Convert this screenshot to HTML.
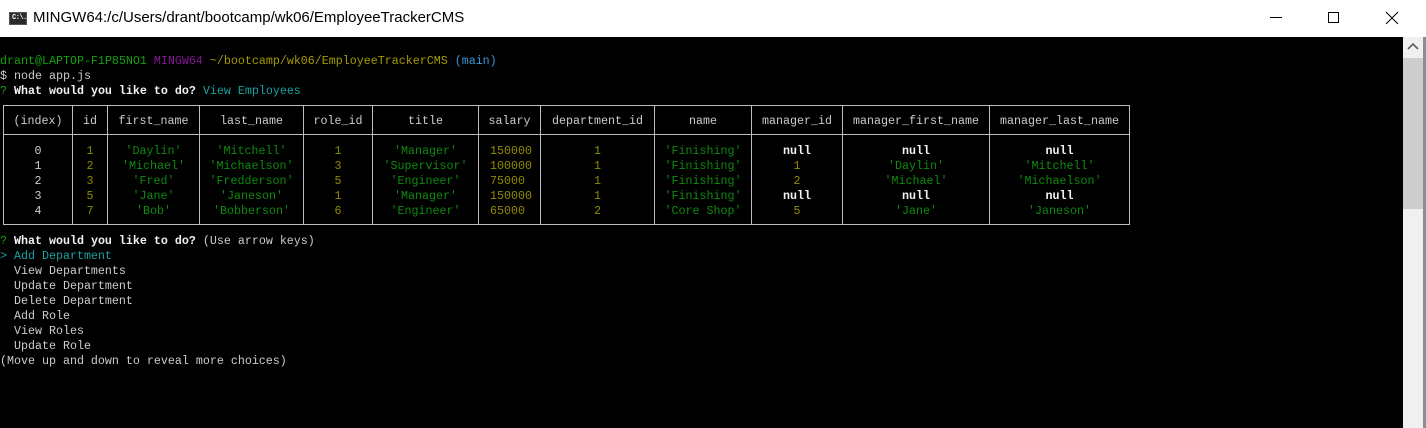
<!DOCTYPE html>
<html><head><meta charset="utf-8">
<style>
*{margin:0;padding:0;box-sizing:border-box}
html,body{width:1426px;height:428px;overflow:hidden;background:#000}
#title{position:absolute;left:0;top:0;width:1426px;height:37px;background:#fff}
#title .t{position:absolute;left:33px;top:9px;font:15px "Liberation Sans",sans-serif;color:#000}
#icon{position:absolute;left:9px;top:12px;width:18px;height:13px;background:#2b2b2b;border:1px solid #555}
#icon span{position:absolute;left:2px;top:1px;font:bold 7px "Liberation Mono",monospace;color:#fff;letter-spacing:-0.5px}
.min{position:absolute;left:1270px;top:17px;width:12px;height:1px;background:#000}
.max{position:absolute;left:1328px;top:12px;width:11px;height:11px;border:1px solid #000}
.close{position:absolute;left:1385px;top:11px}
#term{position:absolute;left:0;top:37px;width:1403px;height:391px;background:#000}
#sb{position:absolute;left:1403px;top:37px;width:20px;height:391px;background:#f0f0f0}
#thumb{position:absolute;left:1403px;top:58px;width:20px;height:151px;background:#cdcdcd}
#sbr{position:absolute;left:1423px;top:37px;width:3px;height:391px;background:#8a8e9a}
.up{position:absolute;left:1407px;top:42px}
.l{position:absolute;left:0;font:11.67px/15px "Liberation Mono",monospace;color:#ccc;white-space:pre}
.g{color:#13a10e}.p{color:#881798}.y{color:#a69b00}.c{color:#3a96dd}.w{color:#f2f2f2;font-weight:bold}
.s{color:#0e8a0e}.n{color:#8f8a00}.tq{color:#1ba0a0}
.hl{position:absolute;height:1px;background:#bdbdbd}
.vl{position:absolute;width:1px;background:#bdbdbd;top:105px;height:120px}
.col{position:absolute;top:0;font:11.67px/15px "Liberation Mono",monospace;white-space:pre;text-align:center}
.col div{height:15px}
.col .h{position:absolute;top:114px;left:0;right:0;color:#ccc}
.col .b{position:absolute;top:144px;left:0;right:0}
</style></head><body>
<div id="title">
 <div id="icon"><span>C:\.</span></div>
 <div class="t">MINGW64:/c/Users/drant/bootcamp/wk06/EmployeeTrackerCMS</div>
 <div class="min"></div><div class="max"></div>
 <svg class="close" width="14" height="14" viewBox="0 0 14 14"><path d="M1 1L13 13M13 1L1 13" stroke="#000" stroke-width="1"/></svg>
</div>
<div id="term"></div>
<div id="sb"></div><div id="thumb"></div><div id="sbr"></div>
<svg class="up" width="12" height="8" viewBox="0 0 12 8"><path d="M1 7L6 2L11 7" stroke="#606060" stroke-width="1.6" fill="none"/></svg>

<div class="l" style="top:54px"><span class="g">drant@LAPTOP-F1P85NO1</span> <span class="p">MINGW64</span> <span class="y">~/bootcamp/wk06/EmployeeTrackerCMS</span> <span class="c">(main)</span></div>
<div class="l" style="top:69px">$ node app.js</div>
<div class="l" style="top:84px"><span class="g">?</span> <b style="color:#f2f2f2">What would you like to do?</b> <span class="tq">View Employees</span></div>

<div class="hl" style="left:3px;width:1127px;top:105px"></div>
<div class="hl" style="left:3px;width:1127px;top:134px"></div>
<div class="hl" style="left:3px;width:1127px;top:224px"></div>
<div class="vl" style="left:3px"></div><div class="vl" style="left:72px"></div><div class="vl" style="left:107px"></div><div class="vl" style="left:199px"></div><div class="vl" style="left:303px"></div><div class="vl" style="left:372px"></div><div class="vl" style="left:478px"></div><div class="vl" style="left:540px"></div><div class="vl" style="left:654px"></div><div class="vl" style="left:751px"></div><div class="vl" style="left:842px"></div><div class="vl" style="left:989px"></div><div class="vl" style="left:1129px"></div>

<div class="col" style="left:4px;width:68px"><div class="h">(index)</div><div class="b" style="color:#ccc"><div>0</div><div>1</div><div>2</div><div>3</div><div>4</div></div></div>
<div class="col" style="left:73px;width:34px"><div class="h">id</div><div class="b n"><div>1</div><div>2</div><div>3</div><div>5</div><div>7</div></div></div>
<div class="col" style="left:108px;width:91px"><div class="h">first_name</div><div class="b s"><div>'Daylin'</div><div>'Michael'</div><div>'Fred'</div><div>'Jane'</div><div>'Bob'</div></div></div>
<div class="col" style="left:200px;width:103px"><div class="h">last_name</div><div class="b s"><div>'Mitchell'</div><div>'Michaelson'</div><div>'Fredderson'</div><div>'Janeson'</div><div>'Bobberson'</div></div></div>
<div class="col" style="left:304px;width:68px"><div class="h">role_id</div><div class="b n"><div>1</div><div>3</div><div>5</div><div>1</div><div>6</div></div></div>
<div class="col" style="left:373px;width:105px"><div class="h">title</div><div class="b s"><div>'Manager'</div><div>'Supervisor'</div><div>'Engineer'</div><div>'Manager'</div><div>'Engineer'</div></div></div>
<div class="col" style="left:479px;width:61px"><div class="h">salary</div><div class="b n" style="text-align:left;padding-left:11px"><div>150000</div><div>100000</div><div>75000</div><div>150000</div><div>65000</div></div></div>
<div class="col" style="left:541px;width:113px"><div class="h">department_id</div><div class="b n"><div>1</div><div>1</div><div>1</div><div>1</div><div>2</div></div></div>
<div class="col" style="left:655px;width:96px"><div class="h">name</div><div class="b s"><div>'Finishing'</div><div>'Finishing'</div><div>'Finishing'</div><div>'Finishing'</div><div>'Core Shop'</div></div></div>
<div class="col" style="left:752px;width:90px"><div class="h">manager_id</div><div class="b"><div class="w">null</div><div class="n">1</div><div class="n">2</div><div class="w">null</div><div class="n">5</div></div></div>
<div class="col" style="left:843px;width:146px"><div class="h">manager_first_name</div><div class="b"><div class="w">null</div><div class="s">'Daylin'</div><div class="s">'Michael'</div><div class="w">null</div><div class="s">'Jane'</div></div></div>
<div class="col" style="left:990px;width:139px"><div class="h">manager_last_name</div><div class="b"><div class="w">null</div><div class="s">'Mitchell'</div><div class="s">'Michaelson'</div><div class="w">null</div><div class="s">'Janeson'</div></div></div>

<div class="l" style="top:234px"><span class="g">?</span> <b style="color:#f2f2f2">What would you like to do?</b> (Use arrow keys)</div>
<div class="l tq" style="top:249px">&gt; Add Department</div>
<div class="l" style="top:264px">  View Departments</div>
<div class="l" style="top:279px">  Update Department</div>
<div class="l" style="top:294px">  Delete Department</div>
<div class="l" style="top:309px">  Add Role</div>
<div class="l" style="top:324px">  View Roles</div>
<div class="l" style="top:339px">  Update Role</div>
<div class="l" style="top:354px">(Move up and down to reveal more choices)</div>
</body></html>
